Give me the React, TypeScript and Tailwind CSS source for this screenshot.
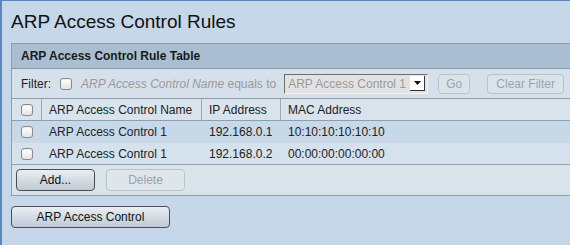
const rows = [
  { name: "ARP Access Control 1", ip: "192.168.0.1", mac: "10:10:10:10:10:10", bg: "bg-[#c7d8e9]" },
  { name: "ARP Access Control 1", ip: "192.168.0.2", mac: "00:00:00:00:00:00", bg: "bg-[#d5e1ed]" },
];

function Box() {
  return (
    <span className="inline-block w-[12px] h-[12px] rounded-[3px] border border-[#8a8a8a] bg-gradient-to-b from-[#ffffff] to-[#e4e4e4] shadow-[inset_0_1px_1px_rgba(0,0,0,0.08)]" />
  );
}

export default function App() {
  return (
    <div
      className="w-[570px] h-[245px] overflow-hidden bg-[#c6d7e9] border-l-2 border-t border-[#5b87b9] pl-[9px] text-[12px] text-[#222]"
      style={{ fontFamily: '"Liberation Sans", Arial, sans-serif' }}
    >
      <h1 className="pt-[10px] text-[19px] leading-[22px] text-[#111]">ARP Access Control Rules</h1>

      <div className="mt-[10px] w-[600px] border border-[#8c9eae]">
        <div className="h-[25px] flex items-center pl-[9px] bg-[#a9bed1] border-b border-[#8597a8] font-bold text-[12px] text-[#1a1a1a]">
          ARP Access Control Rule Table
        </div>

        <div className="h-[30px] flex items-center pl-[9px] bg-[#d5e0ea] border-b border-[#8d9fae]">
          <span>Filter:</span>
          <span className="ml-[9px] flex"><Box /></span>
          <span className="ml-[9px] text-[#9a9a9a]">
            <i>ARP Access Control Name</i> equals to
          </span>
          <div className="ml-[8px] w-[144px] h-[20px] flex items-center justify-between bg-[#e2e2e2] border border-[#6e6e6e] border-r-[#f2f2f2] border-b-[#f2f2f2] pl-[3px] pr-[2px] text-[#9a9a9a]">
            <span>ARP Access Control 1</span>
            <span className="w-[15px] h-[15px] flex items-center justify-center bg-white border-r border-b border-[#333]">
              <svg width="7" height="4" viewBox="0 0 7 4"><path d="M0 0h7L3.5 4z" fill="#111" /></svg>
            </span>
          </div>
          <button className="ml-[10px] w-[32px] h-[20px] rounded-[4px] border border-[#b7c3cc] bg-[#dbe3ea] text-[#9aa3aa]">Go</button>
          <button className="ml-[17px] w-[77px] h-[20px] rounded-[4px] border border-[#b7c3cc] bg-[#dbe3ea] text-[#9aa3aa]">Clear Filter</button>
        </div>

        <div className="h-[22px] flex bg-[#d9e3ec] border-b border-[#8d9fae]">
          <div className="w-[30px] flex items-center justify-center border-r border-[#9aaab8]"><Box /></div>
          <div className="w-[160px] flex items-center pl-[7px] border-r border-[#9aaab8]">ARP Access Control Name</div>
          <div className="w-[79px] flex items-center pl-[7px] border-r border-[#9aaab8]">IP Address</div>
          <div className="flex items-center pl-[7px]">MAC Address</div>
        </div>

        {rows.map((r, i) => (
          <div key={i} className={`h-[22px] flex ${r.bg} ${i === rows.length - 1 ? "border-b border-[#8d9fae]" : ""}`}>
            <div className="w-[30px] flex items-center justify-center"><Box /></div>
            <div className="w-[160px] flex items-center pl-[7px]">{r.name}</div>
            <div className="w-[79px] flex items-center pl-[7px]">{r.ip}</div>
            <div className="flex items-center pl-[7px]">{r.mac}</div>
          </div>
        ))}

        <div className="h-[30px] flex items-center pl-[4px] gap-[11px] bg-[#d9e3ea]">
          <button className="w-[79px] h-[22px] rounded-[4px] border border-[#4e4e4e] bg-gradient-to-b from-[#e9eef2] to-[#bfcbd5] text-[#111]">Add...</button>
          <button className="w-[79px] h-[22px] rounded-[4px] border border-[#b9c5cd] bg-[#dee6ec] text-[#9aa3aa]">Delete</button>
        </div>
      </div>

      <button className="mt-[10px] w-[159px] h-[22px] rounded-[4px] border border-[#4e4e4e] bg-gradient-to-b from-[#e9eef2] to-[#bfcbd5] text-[#111]">
        ARP Access Control
      </button>
    </div>
  );
}
